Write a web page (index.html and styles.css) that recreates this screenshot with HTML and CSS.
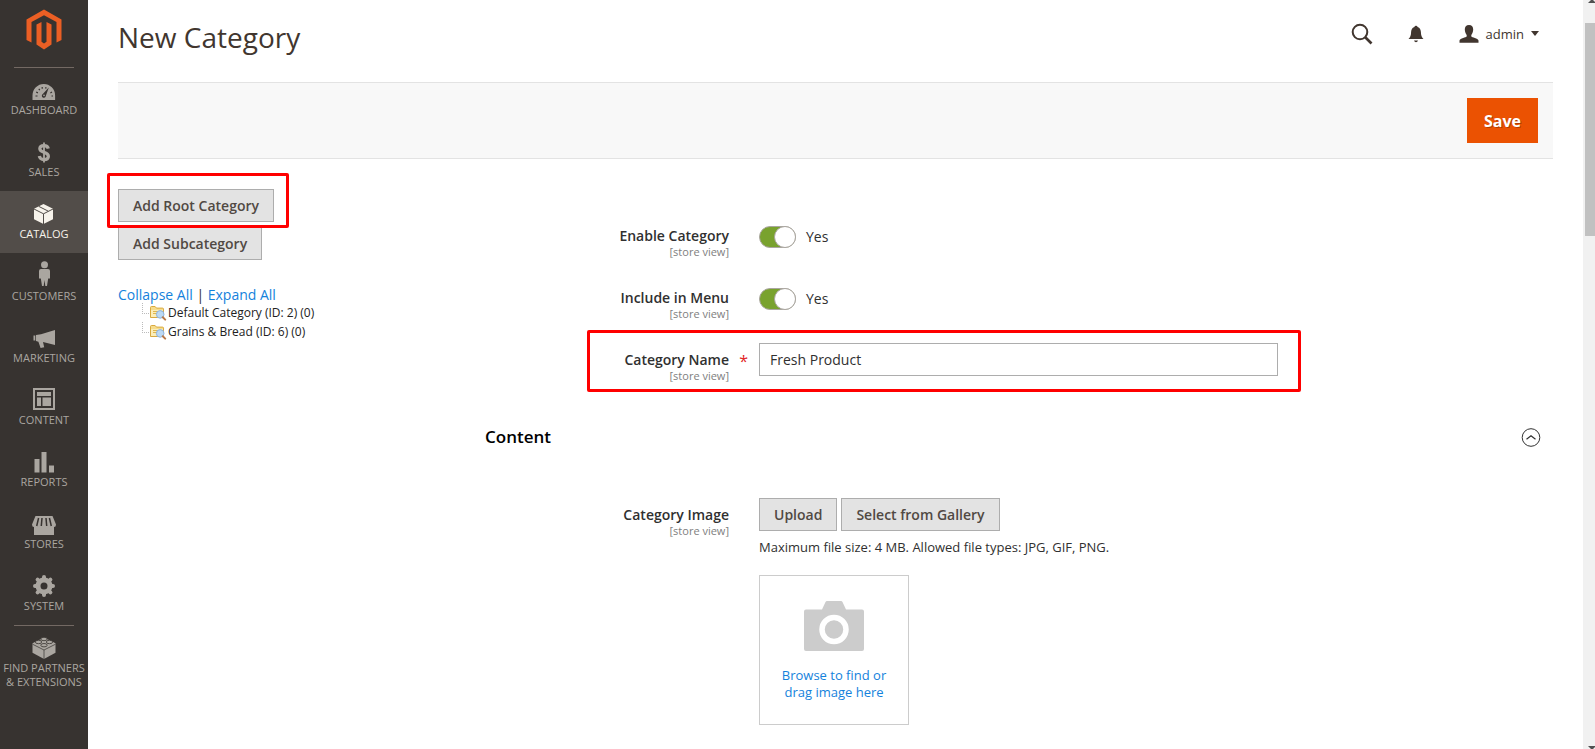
FILE: index.html
```html
<!DOCTYPE html>
<html lang="en">
<head>
<meta charset="utf-8">
<meta name="viewport" content="width=device-width, initial-scale=1">
<title>New Category</title>
<link rel="stylesheet" href="styles.css">
</head>
<body>
<svg class="defs" width="0" height="0" aria-hidden="true">
  <symbol id="folder" viewBox="0 0 18 16">
    <path d="M1.5 12.5V2.5q0-1 1-1h3.6l1.4 1.6h6q1 0 1 1v8.4z" fill="#f6dc8c" stroke="#d9a93f"/>
    <path d="M2 5h12v7H2z" fill="#fbeeb9"/>
    <path d="M4 6.500h7M4 8.500h5" stroke="#dfb650"/>
    <circle cx="11.200" cy="9.400" r="3.800" fill="#bcd9f4" stroke="#8fb2dc"/>
    <path d="M13.800 12.200l2.400 2.400" stroke="#b8794a" stroke-width="2" stroke-linecap="round"/>
  </symbol>
</svg>
<nav class="sidebar" aria-label="Main">
  <a class="logo" href="#" aria-label="Magento">
    <svg width="36" height="42" viewBox="0 0 36 42"><g fill="#eb5f24"><path d="M18 .5l17.500 10v20.500L30.500 33.500V13L18 6.200 5.500 13v20.500L.5 31V10.500z"/><path d="M10.500 15.500l5-2.500v19.800l2.500 1.600 2.500-1.600V13l5 2.500v20L18 40.500 10.500 35.500z"/></g></svg>
  </a>
  <ul class="menu">
    <li><a class="menu-item" href="#">
      <svg class="menu-icon" viewBox="0 0 28 28"><path d="M2.500 25v-4.500a11.300 11.500 0 0 1 22.600 0V25z" fill="currentColor"/><path d="M5.500 21h2M6.200 17l1.700.9M8.800 13.800l1 1.400M12.200 12v1.700M16 12.200l-.3 1.500M22 17l-1.600.9M21.500 21h1.500" stroke="#373330" stroke-width="1.200"/><path d="M18.800 12.500l-3 8.500a2 2 0 1 1-3-1.900z" fill="#373330"/><circle cx="14" cy="20.400" r=".8" fill="currentColor"/></svg>
      <span>DASHBOARD</span></a></li>
    <li><a class="menu-item" href="#">
      <svg class="menu-icon" viewBox="0 0 28 28"><path d="M18.300 11.600c-.4-2-2-3-4.300-3-2.600 0-4.200 1.200-4.200 3.100 0 4.600 8.600 2.400 8.600 7.500 0 2.100-1.700 3.400-4.400 3.400-2.600 0-4.300-1.200-4.700-3.500" fill="none" stroke="currentColor" stroke-width="3.200"/><path d="M14 5.500v20" stroke="currentColor" stroke-width="1.800"/></svg>
      <span>SALES</span></a></li>
    <li><a class="menu-item active" href="#">
      <svg class="menu-icon" viewBox="0 0 28 28"><path d="M13.500 5l9.500 4.800v10.400L13.500 25 4 20.200V9.800z" fill="#f7f3eb"/><path d="M4 10l9.500 4.800L23 10M8.800 7.400l9.500 4.800M13.500 14.800V25" fill="none" stroke="#524d49" stroke-width="1"/></svg>
      <span>CATALOG</span></a></li>
    <li><a class="menu-item" href="#">
      <svg class="menu-icon" viewBox="0 0 28 28"><circle cx="14.500" cy="3.700" r="3.500" fill="currentColor"/><path d="M11 8h7q2 0 2 2v7.500h-1.800l-1.200 7.500h-1.700l-.8-6-.8 6H12l-1.200-7.500H9V10q0-2 2-2z" fill="currentColor"/></svg>
      <span>CUSTOMERS</span></a></li>
    <li><a class="menu-item" href="#">
      <svg class="menu-icon" viewBox="0 0 28 28"><path d="M3.500 12.500h1.800v5H3.500zM6 12l5-.7L25 7v15l-12-3 1.200 5.200-3.600.8L8.400 18.700 6 18z" fill="currentColor"/></svg>
      <span>MARKETING</span></a></li>
    <li><a class="menu-item" href="#">
      <svg class="menu-icon" viewBox="0 0 28 28"><path d="M4 4h20v20H4z" fill="none" stroke="currentColor" stroke-width="2"/><path d="M7 7h14v4H7zM7 12.500h4V21H7zM12.500 12.500H21V21h-8.500z" fill="currentColor"/></svg>
      <span>CONTENT</span></a></li>
    <li><a class="menu-item" href="#">
      <svg class="menu-icon" viewBox="0 0 28 28"><path d="M4.500 12h5v13.500h-5zM11.500 5h5v20.500h-5zM19 18.500h5v7h-5z" fill="currentColor"/></svg>
      <span>REPORTS</span></a></li>
    <li><a class="menu-item" href="#">
      <svg class="menu-icon" viewBox="0 0 28 28"><path d="M5.500 7h17L26 15.500q0 2.500-2 2.500V26H4v-8q-2 0-2-2.500z" fill="currentColor"/><path d="M8.600 9L6.700 17M12 9l-.7 8M16 9l.7 8M19.400 9l1.900 8" stroke="#373330" stroke-width="1.500"/></svg>
      <span>STORES</span></a></li>
    <li><a class="menu-item" href="#">
      <svg class="menu-icon" viewBox="0 0 28 28"><circle cx="14" cy="15" r="6" fill="none" stroke="currentColor" stroke-width="5"/><g stroke="currentColor" stroke-width="4" stroke-linecap="round"><path d="M14 6v2M14 22v2M5 15h2M21 15h2M7.600 8.600l1.500 1.500M18.900 19.900l1.500 1.500M7.600 21.400l1.500-1.500M18.900 10.100l1.500-1.500"/></g></svg>
      <span>SYSTEM</span></a></li>
    <li class="menu-last"><a class="menu-item" href="#">
      <svg class="menu-icon" viewBox="0 0 28 28"><path d="M14 4.500l11.500 5.700v9.600L14 26 2.500 19.800v-9.600z" fill="currentColor"/><path d="M2.500 11.200L14 17l11.500-5.800M14 17v9" fill="none" stroke="#373330" stroke-width=".7"/><g fill="currentColor" stroke="#373330" stroke-width=".8"><ellipse cx="14" cy="6" rx="3.200" ry="1.700"/><ellipse cx="8.500" cy="9" rx="3.200" ry="1.700"/><ellipse cx="19.500" cy="9" rx="3.200" ry="1.700"/><ellipse cx="14" cy="12.200" rx="3.200" ry="1.700"/></g></svg>
      <span>FIND PARTNERS<br>&amp; EXTENSIONS</span></a></li>
  </ul>
</nav>

<main class="page">
  <header class="page-header">
    <h1 class="page-title">New Category</h1>
    <div class="header-tools">
      <button class="tool" type="button" aria-label="Search"><svg width="22" height="22" viewBox="0 0 22 22"><circle cx="9" cy="9" r="7.300" fill="none" stroke="#41362f" stroke-width="2"/><path d="M14 14l6.500 6.500" stroke="#41362f" stroke-width="2.600"/></svg></button>
      <button class="tool" type="button" aria-label="Notifications"><svg width="16" height="18" viewBox="0 0 16 18"><path d="M8 .7q1.300 0 1.600 1.200C12 2.700 12.800 4.800 12.900 7c.1 3.700.9 5.500 2.600 7H.5C2.200 12.500 3 10.700 3.100 7c.1-2.200.9-4.300 3.300-5.100Q6.700.7 8 .7zM6 15.500h4q-.5 1.700-2 1.700t-2-1.700z" fill="#41362f"/></svg></button>
      <button class="tool account" type="button"><svg width="20" height="20" viewBox="0 0 20 20"><path d="M10 1c2.800 0 4.300 1.900 4.200 4.600-.1 2.600-1 4.300-1.900 5.300v1.600c.5 1 6.700 1.700 7.200 4v2.200H.5v-2.200c.5-2.300 6.700-3 7.200-4v-1.600c-.9-1-1.800-2.700-1.900-5.300C5.700 2.900 7.200 1 10 1z" fill="#41362f"/></svg><span>admin</span><svg width="8" height="5" viewBox="0 0 8 5"><path d="M0 0h8L4 5z" fill="#41362f"/></svg></button>
    </div>
  </header>

  <div class="actions-bar"><button class="btn-save" type="button">Save</button></div>

  <div class="columns">
    <section class="tree-panel">
      <div class="tree-buttons">
        <div class="marked marked-button"><button class="btn" type="button">Add Root Category</button></div>
        <button class="btn" type="button">Add Subcategory</button>
      </div>
      <p class="tree-controls"><a href="#">Collapse All</a> | <a href="#">Expand All</a></p>
      <ul class="tree">
        <li><svg class="folder" aria-hidden="true"><use href="#folder"/></svg><span>Default Category (ID: 2) (0)</span></li>
        <li><svg class="folder" aria-hidden="true"><use href="#folder"/></svg><span>Grains &amp; Bread (ID: 6) (0)</span></li>
      </ul>
    </section>

    <form class="form">
      <div class="field">
        <label class="label" for="enable">Enable Category<small>[store view]</small></label>
        <div class="control switch-row"><input class="switch" id="enable" type="checkbox" checked><span>Yes</span></div>
      </div>
      <div class="field">
        <label class="label" for="menu">Include in Menu<small>[store view]</small></label>
        <div class="control switch-row"><input class="switch" id="menu" type="checkbox" checked><span>Yes</span></div>
      </div>
      <div class="field marked marked-field">
        <label class="label required" for="name">Category Name<small>[store view]</small></label>
        <div class="control"><input class="text-input" id="name" type="text" value="Fresh Product"></div>
      </div>

      <div class="section-head">
        <h2>Content</h2>
        <button class="collapse" type="button" aria-label="Collapse section"><svg width="20" height="20" viewBox="0 0 20 20" fill="none" stroke="#303030"><circle cx="10" cy="10.500" r="8.800"/><path d="M5.500 12.300L10 8.700l4.500 3.600" stroke-width="1.200"/></svg></button>
      </div>

      <div class="field">
        <label class="label" for="image">Category Image<small>[store view]</small></label>
        <div class="control">
          <div class="upload-buttons">
            <button class="btn" id="image" type="button">Upload</button>
            <button class="btn" type="button">Select from Gallery</button>
          </div>
          <p class="note">Maximum file size: 4 MB. Allowed file types: JPG, GIF, PNG.</p>
          <button class="dropzone" type="button">
            <svg width="62" height="52" viewBox="0 0 62 52"><path d="M3 9.500h16L22.500 2Q23 1 24 1h14q1 0 1.500 1L43 9.500h16q2 0 2 2V49q0 2-2 2H3q-2 0-2-2V11.500q0-2 2-2z" fill="#ccc"/><circle cx="31" cy="29.500" r="12" fill="none" stroke="#fff" stroke-width="5.500"/></svg>
            <span>Browse to find or drag image here</span>
          </button>
        </div>
      </div>
    </form>
  </div>
</main>

<div class="scroll-track" aria-hidden="true">
  <svg width="10" height="3" viewBox="0 0 10 3"><path d="M3 3l3-3h2l3 3z" fill="#505050"/></svg>
  <div class="scroll-thumb"></div>
  <svg class="scroll-down" width="10" height="3" viewBox="0 0 10 3"><path d="M3 0h8L8 3H6z" fill="#505050"/></svg>
</div>
</body>
</html>
```
FILE: styles.css
```css
*, *::before, *::after { box-sizing: border-box; }

body {
  margin: 0;
  min-height: 100vh;
  display: flex;
  background: #fff;
  color: #303030;
  font: 14px/18px "Open Sans", "Noto Sans", sans-serif;
}

h1, h2, p, ul { margin: 0; padding: 0; }
ul { list-style: none; }
a { color: #1482dc; text-decoration: none; }
button, input { font: inherit; color: inherit; margin: 0; border-radius: 0; }
button { cursor: pointer; }
svg { display: block; flex: none; }
.defs { position: absolute; }

/* Sidebar */
.sidebar { flex: none; width: 88px; background: #373330; }
.logo { display: flex; justify-content: center; height: 67px; padding-top: 9px; }
.menu-item {
  display: flex;
  flex-direction: column;
  align-items: center;
  min-height: 62px;
  padding-top: 8px;
  color: #aaa6a0;
  font-size: 11px;
  line-height: 14px;
  text-align: center;
  white-space: nowrap;
}
.menu::before, .menu-last::before {
  content: "";
  display: block;
  height: 1px;
  margin: 0 14px -1px;
  background: #736963;
}
.menu-item.active { background: #524d49; color: #f7f3eb; }
.menu-icon { width: 28px; height: 28px; }

/* Header */
.page { flex: 1; min-width: 0; padding: 0 30px; }
.page-header { display: flex; justify-content: space-between; height: 82px; }
.page-title { padding-top: 17px; font-size: 28px; line-height: 40px; font-weight: 400; color: #41362f; }
.header-tools { display: flex; align-items: center; gap: 35px; height: 67px; padding-right: 14px; }
.tool { display: flex; align-items: center; padding: 0; border: 0; background: none; }
.account { gap: 7px; font-size: 13px; color: #41362f; }

.actions-bar {
  display: flex;
  justify-content: flex-end;
  padding: 15px;
  background: #f8f8f8;
  border: solid #e3e3e3;
  border-width: 1px 0;
}
.btn-save {
  height: 45px;
  padding: 0 17px;
  border: 0;
  background: #eb5202;
  color: #fff;
  font-size: 16px;
  font-weight: 700;
  text-shadow: 1px 1px 0 rgba(0, 0, 0, .25);
}

/* Columns */
.columns {
  display: grid;
  grid-template-columns: minmax(0, 1fr) minmax(0, 3fr);
  gap: 11px;
  padding: 30px 0 0;
}
.btn {
  height: 33px;
  padding: 0 14px;
  border: 1px solid #adadad;
  background: #e3e3e3;
  color: #514943;
  font-weight: 600;
  white-space: nowrap;
}
.tree-buttons { display: flex; flex-direction: column; align-items: flex-start; gap: 5px; }
.tree-controls { margin-top: 27px; line-height: 16px; }
.tree { padding-left: 24px; color: #222; font-size: 12px; }
.tree li { position: relative; display: flex; align-items: center; height: 19px; padding-left: 7px; gap: 1px; }
.tree li::before {
  content: "";
  position: absolute;
  inset: 0 auto 8px 0;
  width: 7px;
  border: dotted #bbb;
  border-width: 0 0 1px 1px;
}
.folder { width: 18px; height: 16px; }

/* Highlight frames around the steps of the guide */
.marked { position: relative; }
.marked::after {
  content: "";
  position: absolute;
  z-index: 1;
  border: 3px solid #f00;
  border-radius: 2px;
  pointer-events: none;
}
.marked-button::after { inset: -16px -15px -6px -11px; }
.marked-field::after { inset: -13px 23.600% -9px 102px; }

/* Form */
.form { padding-top: 30px; }
.field {
  display: grid;
  grid-template-columns: minmax(0, 244fr) minmax(0, 519fr) minmax(0, 245fr);
  column-gap: 30px;
}
.field + .field { margin-top: 22px; }
.label {
  position: relative;
  padding-top: 8px;
  font-weight: 600;
  line-height: 17px;
  text-align: right;
}
.label small { display: block; color: #808080; font-size: 11px; line-height: 15px; font-weight: 400; }
.required::after { content: "*"; position: absolute; top: 10px; right: -19px; color: #e22626; font-size: 16px; font-weight: 400; }
.switch-row { display: flex; align-items: center; gap: 10px; height: 36px; }
.switch {
  appearance: none;
  position: relative;
  width: 37px;
  height: 22px;
  border: 1px solid #aaa6a0;
  border-radius: 11px;
  background: #79a22e;
}
.switch::before {
  content: "";
  position: absolute;
  top: -1px;
  right: -1px;
  width: 22px;
  height: 22px;
  border: 1px solid #aaa6a0;
  border-radius: 50%;
  background: #fff;
}
.text-input { display: block; width: 100%; height: 33px; padding: 0 10px; border: 1px solid #adadad; background: #fff; }

.section-head { display: flex; align-items: center; justify-content: space-between; margin: 42px 0 49px; padding-right: 12px; }
.section-head h2 { color: #000; font-size: 17px; line-height: 24px; font-weight: 600; }
.collapse { padding: 0; border: 0; background: none; }

.upload-buttons { display: flex; gap: 4px; }
.note { margin-top: 7px; font-size: 13px; white-space: nowrap; }
.dropzone {
  display: flex;
  flex-direction: column;
  align-items: center;
  gap: 15px;
  width: 150px;
  height: 150px;
  margin-top: 19px;
  padding: 24px 16px 0;
  border: 1px solid #ccc;
  background: #fff;
  color: #1482dc;
  font-size: 13px;
  line-height: 17px;
}

/* Scrollbar */
.scroll-track { display: flex; flex-direction: column; flex: none; width: 12px; padding-left: 2px; background: #f1f1f1; }
.scroll-thumb { height: 213px; margin-top: 20px; background: #c1c1c1; }
.scroll-down { margin-top: auto; }
```
